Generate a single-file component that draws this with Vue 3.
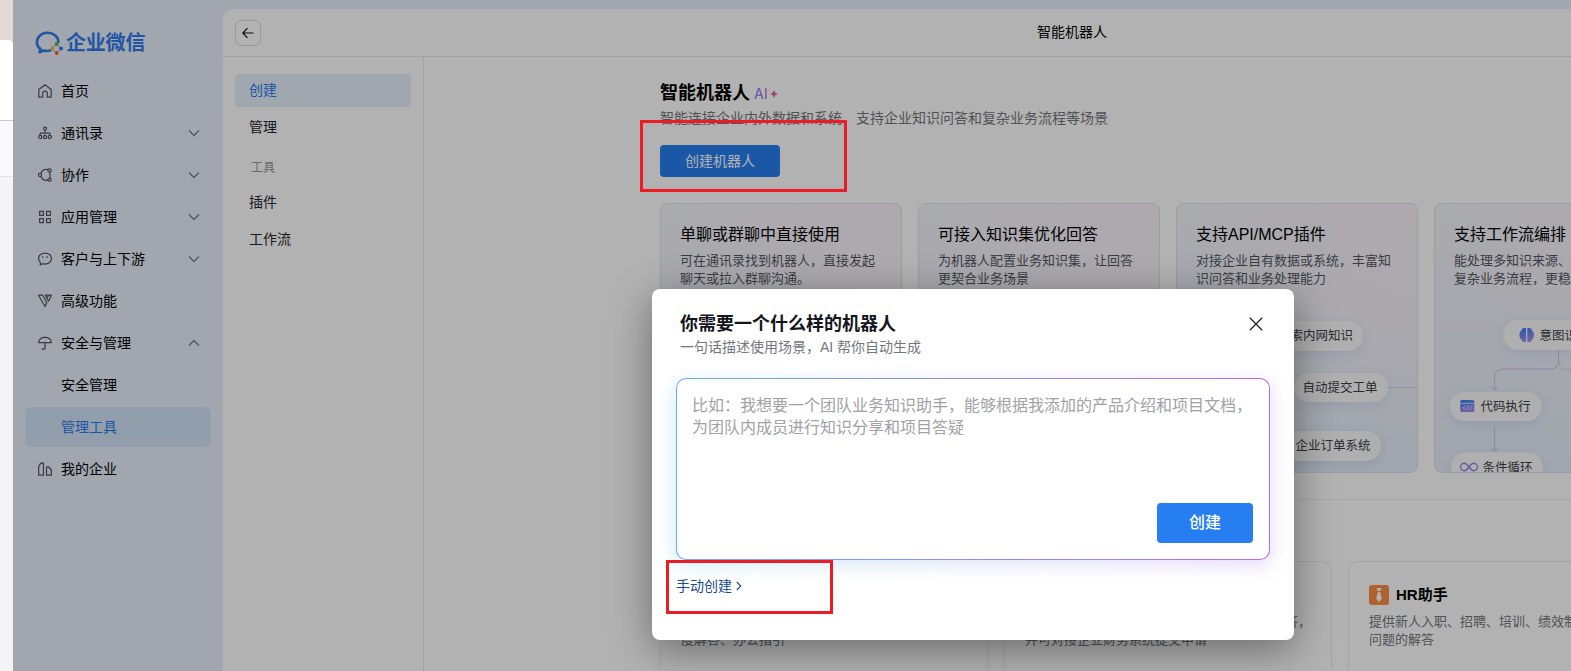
<template>
  <div class="screen">
    <div class="edge">
      <div class="edge__tab"></div>
      <div class="edge__bar"></div>
    </div>

    <div class="app">
      <aside class="sidebar">
        <div class="logo">
          <svg class="logo__mark" viewBox="0 0 28 24" width="28" height="24">
            <path
              d="M23.400 10.800C23 5.400 18.400 1.800 12.500 1.800S1.900 5.900 1.900 11.200c0 2.900 1.300 5.200 3.500 6.800L4.600 21.300l3.900-1.800c2.300.7 4.600.7 6.800.1"
              fill="none"
              stroke="#2f7bea"
              stroke-width="2.600"
              stroke-linejoin="round"
              stroke-linecap="round"
            />
            <path d="M21.500 13l4 4.500-4 4.500-4.500-4.500z" fill="none" stroke="#b9c6d8" stroke-width="1.400" />
            <circle cx="21.700" cy="12.900" r="1.900" fill="#4eb53a" />
            <circle cx="17.200" cy="17.500" r="1.900" fill="#f3bd3a" />
            <circle cx="21.700" cy="22" r="1.900" fill="#f2602c" />
            <circle cx="26" cy="17.500" r="1.900" fill="#2f7bea" />
          </svg>
          <span class="logo__text">企业微信</span>
        </div>
        <nav class="menu">
          <div
            v-for="item in menu"
            :key="item.text"
            :class="['menu__item', { active: item.active }]"
          >
            <svg class="menu__icon" viewBox="0 0 14 14" width="14" height="14">
              <path v-if="item.icon" :d="item.icon" />
            </svg>
            <span class="menu__text">{{ item.text }}</span>
            <svg v-if="item.arrow" class="menu__arrow" viewBox="0 0 12 8" width="12" height="8">
              <path :d="item.arrow === 'up' ? 'M1 6.500l5-5 5 5' : 'M1 1.500l5 5 5-5'" />
            </svg>
          </div>
        </nav>
      </aside>

      <main class="main">
        <header class="header">
          <div class="back">
            <svg viewBox="0 0 12 12" width="12" height="12">
              <path d="M11.500 6H1M5.500 1.200L.8 6l4.700 4.800" />
            </svg>
          </div>
          <div class="header__title">智能机器人</div>
        </header>

        <div class="body">
          <div class="subnav">
            <div
              v-for="item in subnav"
              :key="item.text"
              :class="['subnav__item', { active: item.active, label: item.label }]"
            >
              {{ item.text }}
            </div>
          </div>

          <div class="content">
            <div class="intro">
              <div class="intro__title">
                <span>智能机器人</span>
                <span class="ai">AI</span>
                <svg class="spark" viewBox="0 0 8 8" width="8" height="8">
                  <path d="M4 0L5.200 2.800l2.800 1.200-2.800 1.200L4 8 2.800 5.200 0 4l2.800-1.200z" fill="#d663b8" />
                </svg>
              </div>
              <div class="intro__desc">智能连接企业内外数据和系统，支持企业知识问答和复杂业务流程等场景</div>
              <button class="btn">创建机器人</button>
            </div>

            <div class="features">
              <div v-for="card in features" :key="card.title" class="feature">
                <div class="feature__title">{{ card.title }}</div>
                <div class="feature__desc">{{ card.desc }}</div>

                <svg v-if="card.art === 'plugin'" class="art" viewBox="1 1 240 268">
                  <path d="M212 184.500h30" stroke="#c5d6ee" />
                  <g class="pill">
                    <rect x="70" y="118" width="117" height="30" rx="15" />
                    <rect x="118" y="170" width="94" height="29" rx="14.500" />
                    <rect x="80" y="228" width="125" height="30" rx="15" />
                  </g>
                  <g class="art__text" text-anchor="end">
                    <text x="177" y="137">搜索内网知识</text>
                    <text x="201.500" y="188.500">自动提交工单</text>
                    <text x="194.500" y="247">企业订单系统</text>
                  </g>
                </svg>

                <svg v-if="card.art === 'flow'" class="art" viewBox="1 1 240 268">
                  <defs>
                    <linearGradient id="iconFill" x1="0" y1="0" x2="0.400" y2="1">
                      <stop offset="0" stop-color="#2f7ff0" />
                      <stop offset="1" stop-color="#a18cf0" />
                    </linearGradient>
                  </defs>
                  <g fill="none" stroke="#c9c1ea">
                    <path d="M124.500 147v11q0 8-9 8H70q-9.400 0-9.400 9v12M57 183.500l3.600 3.600 3.600-3.600" />
                    <path d="M124.500 158q0 9 9 9h60" opacity=".7" />
                    <path d="M60.600 223v25M57 244.500l3.600 3.600 3.600-3.600" />
                  </g>
                  <g class="pill">
                    <rect x="69" y="117" width="112" height="30" rx="15" />
                    <rect x="15.700" y="189" width="92" height="29" rx="14.500" />
                    <rect x="17" y="249.500" width="92" height="29" rx="14.500" />
                  </g>
                  <path
                    d="M92.100 125.300c-3-.8-4.700 1-4.800 2.400-2.500 1.200-2.500 7.200 0 8.600.6 2.400 3 3.200 4.800 2.200zM93.300 125.300c3-.8 4.700 1 4.800 2.400 2.500 1.200 2.500 7.200 0 8.600-.6 2.400-3 3.200-4.800 2.200z"
                    fill="url(#iconFill)"
                  />
                  <rect x="26.300" y="197" width="14" height="12" rx="1.500" fill="url(#iconFill)" />
                  <path d="M26.300 200.300h14" stroke="#e6e9fb" stroke-width=".8" />
                  <path
                    d="M31.200 202.800l-2 2 2 2M35.400 202.800l2 2-2 2M34 202.500l-1.400 4.700"
                    fill="none"
                    stroke="#f3f3ff"
                    stroke-width=".9"
                  />
                  <path
                    d="M35 264c-2-2.800-3.200-3.700-4.800-3.700a3.600 3.600 0 0 0 0 7.400c1.600 0 2.800-.9 4.800-3.700s3.200-3.700 4.800-3.700a3.600 3.600 0 0 1 0 7.400c-1.600 0-2.800-.9-4.800-3.700z"
                    fill="none"
                    stroke="#9484e4"
                    stroke-width="1.400"
                  />
                  <g class="art__text">
                    <text x="105.500" y="137">意图识别</text>
                    <text x="46.400" y="208">代码执行</text>
                    <text x="48.400" y="268.500">条件循环</text>
                  </g>
                </svg>
              </div>
            </div>

            <div class="divider"></div>

            <div class="templates">
              <div v-for="tpl in templates" :key="tpl.title" class="template">
                <div class="template__head">
                  <svg viewBox="0 0 20 20" width="20" height="20">
                    <rect width="20" height="20" rx="3" :fill="tpl.color" />
                    <path d="M7.500 3h5l-1.200 3H8.700zM8.900 7h2.200l1.700 6.800L10 17l-2.800-3.200z" fill="#fff" />
                  </svg>
                  <span>{{ tpl.title }}</span>
                </div>
                <div class="template__desc">{{ tpl.desc }}</div>
              </div>
            </div>
          </div>
        </div>
      </main>

      <div class="mask"></div>
    </div>

    <div class="dialog">
      <div class="dialog__head">
        <div class="dialog__title">你需要一个什么样的机器人</div>
        <svg class="dialog__close" viewBox="0 0 14 14" width="14" height="14">
          <path d="M.8.800l12.400 12.400M13.200.8L.8 13.200" />
        </svg>
      </div>
      <div class="dialog__sub">一句话描述使用场景，AI 帮你自动生成</div>
      <div class="prompt">
        <div class="prompt__inner">
          <div class="prompt__placeholder">{{ placeholder }}</div>
          <button class="btn btn--large">创建</button>
        </div>
      </div>
      <div class="manual">
        <span>手动创建</span>
        <svg viewBox="0 0 6 10" width="6" height="10">
          <path d="M.8 1l4 4-4 4" />
        </svg>
      </div>
    </div>

    <div class="marker marker--top"></div>
    <div class="marker marker--bottom"></div>
  </div>
</template>

<script setup>
const icons = {
  home: "M.8 5.400L7 .8l6.200 4.600v7.800H9.300V9.500a2.300 2.300 0 0 0-4.600 0v3.700H.8z",
  contacts:
    "M7 1a1.500 1.500 0 1 1 0 3 1.500 1.500 0 0 1 0-3zM7 4v3M2.200 9V7h9.600v2M2.200 9.300a1.600 1.600 0 1 1 0 3.200 1.600 1.600 0 0 1 0-3.200zM7 9.300a1.600 1.600 0 1 1 0 3.200 1.600 1.600 0 0 1 0-3.200zM11.800 9.300a1.600 1.600 0 1 1 0 3.200 1.600 1.600 0 0 1 0-3.200z",
  share:
    "M2 5.300a1.600 1.600 0 1 1 0 3.200 1.600 1.600 0 0 1 0-3.200zM11.500.8a1.600 1.600 0 1 1 0 3.200 1.600 1.600 0 0 1 0-3.200zM11.500 10a1.600 1.600 0 1 1 0 3.200 1.600 1.600 0 0 1 0-3.200zM9.900 1.700C6.700.9 4 2.500 3 5.500M3 8.500c1 2.800 3.700 4.300 6.900 3.600M12 4v6",
  apps: "M1.600 1.400h3.800v4H1.600zM8.600 1.400h3.800v4H8.600zM1.600 8.600h3.800v4H1.600zM8.600 8.600h3.800v4H8.600z",
  chat: "M7 1c3.600 0 6.400 2.400 6.400 5.500S10.600 12 7 12c-.8 0-1.600-.1-2.300-.3l-2.500 1.200.2-2.500C1.200 9.400.6 8 .6 6.500.6 3.400 3.400 1 7 1zM4.700 4.300v1.500M9.300 4.300v1.500",
  premium: "M.5 1.200h4.300l4 7.600L7 12.500zM7.500 1.200h6l-3 6zM8.800 3.600L11 1.400",
  umbrella: "M.6 6.500C1 3.200 3.600 1.300 7 1.300s6 1.900 6.400 5.200zM7 .3v1M7 6.500v5.400c0 1.900-2.800 1.900-2.800.1",
  company: "M.7 13.200V4.500L2.800 1.200 5.400.8v12.400zM8.500 4.800h1.800l3 3v5.400H8.500z",
};

const menu = [
  { text: "首页", icon: icons.home },
  { text: "通讯录", icon: icons.contacts, arrow: "down" },
  { text: "协作", icon: icons.share, arrow: "down" },
  { text: "应用管理", icon: icons.apps, arrow: "down" },
  { text: "客户与上下游", icon: icons.chat, arrow: "down" },
  { text: "高级功能", icon: icons.premium },
  { text: "安全与管理", icon: icons.umbrella, arrow: "up" },
  { text: "安全管理" },
  { text: "管理工具", active: true },
  { text: "我的企业", icon: icons.company },
];

const subnav = [
  { text: "创建", active: true },
  { text: "管理" },
  { text: "工具", label: true },
  { text: "插件" },
  { text: "工作流" },
];

const features = [
  { title: "单聊或群聊中直接使用", desc: "可在通讯录找到机器人，直接发起\n聊天或拉入群聊沟通。" },
  { title: "可接入知识集优化回答", desc: "为机器人配置业务知识集，让回答\n更契合业务场景" },
  {
    title: "支持API/MCP插件",
    desc: "对接企业自有数据或系统，丰富知\n识问答和业务处理能力",
    art: "plugin",
  },
  {
    title: "支持工作流编排",
    desc: "能处理多知识来源、\n复杂业务流程，更稳",
    art: "flow",
  },
];

const templates = [
  { title: "行政助手", color: "#3a86f5", desc: "提供考勤、休假、办公用品等行政制\n度解答、办公指引" },
  {
    title: "财务助手",
    color: "#35b56a",
    desc: "提供员工报销、差旅、发票等财务制度问题解答，\n并可对接企业财务系统提交申请",
  },
  { title: "HR助手", color: "#fb8b44", desc: "提供新人入职、招聘、培训、绩效制度等\n问题的解答" },
];

const placeholder =
  "比如：我想要一个团队业务知识助手，能够根据我添加的产品介绍和项目文档，\n为团队内成员进行知识分享和项目答疑";
</script>

<style>
body {
  margin: 0;
  overflow: hidden;
}
</style>

<style scoped>
.screen {
  position: relative;
  display: flex;
  width: 100vw;
  height: 671px;
  overflow: hidden;
  font-family: "Liberation Sans", "Noto Sans CJK SC", sans-serif;
  font-size: 14px;
  line-height: 20px;
  color: #000;
}
svg {
  flex: none;
}

/* neighbouring window on the left */
.edge {
  flex: none;
  width: 13px;
  padding-top: 40px;
  box-sizing: border-box;
  background: linear-gradient(#e3d9d6 60px, #f4f4f4 60px);
}
.edge__tab {
  height: 80px;
  background: #fff;
  border-top-right-radius: 5px;
}
.edge__bar {
  height: 55px;
  background: #fafafa;
  border-top: 1px solid #c9c9c9;
  border-bottom: 1px solid #e2e2e2;
}

.app {
  position: relative;
  flex: none;
  display: flex;
  width: 1907px;
  height: 671px;
  background: #e7eefb;
}
.mask {
  position: absolute;
  inset: 0;
  background: rgba(0, 0, 0, 0.3);
}

.sidebar {
  flex: none;
  width: 210px;
}
.logo {
  display: flex;
  align-items: center;
  gap: 3px;
  height: 24px;
  padding: 31px 0 16px 22px;
}
.logo__text {
  font-size: 20px;
  font-weight: 600;
  line-height: 24px;
  color: #2f7bea;
  letter-spacing: -0.2px;
}
.menu {
  display: flex;
  flex-direction: column;
  gap: 2px;
  padding: 0 12px;
}
.menu__item {
  display: flex;
  align-items: center;
  height: 40px;
  padding: 0 11px 0 13px;
  border-radius: 6px;
}
.menu__item.active {
  background: #d2e2f5;
  color: #2a7cf0;
}
.menu__icon,
.menu__arrow {
  fill: none;
  stroke: #55585f;
  stroke-width: 1.25;
  stroke-linejoin: round;
}
.menu__arrow {
  stroke: #787c85;
}
.menu__text {
  flex: 1;
  margin-left: 9px;
}

.main {
  flex: 1;
  margin-top: 9px;
  background: #fff;
  border-top-left-radius: 10px;
}
.header {
  display: flex;
  align-items: center;
  height: 47px;
  padding: 0 12px;
  border-bottom: 1px solid #ebebeb;
}
.header__title {
  flex: 1;
  text-align: center;
  margin-right: 25px;
  padding-bottom: 2px;
}
.back {
  display: flex;
  align-items: center;
  justify-content: center;
  width: 24px;
  height: 24px;
  border: 1px solid #dcdcdc;
  border-radius: 6px;
}
.back svg {
  fill: none;
  stroke: #111;
  stroke-width: 1.2;
}
.body {
  display: flex;
  height: 614px;
}
.subnav {
  flex: none;
  width: 176px;
  padding: 17px 12px 0;
  border-right: 1px solid #ebebeb;
}
.subnav__item {
  height: 33px;
  margin-bottom: 4px;
  padding: 0 14px;
  border-radius: 4px;
  line-height: 33px;
  color: #24272e;
}
.subnav__item.active {
  background: #e5effb;
  color: #2a7cf0;
}
.subnav__item.label {
  height: 34px;
  padding: 0 16px;
  font-size: 12px;
  line-height: 40px;
  color: #95979c;
}

.content {
  flex: none;
  width: 1016px;
  margin-left: 236px;
}
.intro {
  padding-top: 23px;
}
.intro__title {
  display: flex;
  align-items: center;
  height: 27px;
  line-height: 27px;
  font-size: 18px;
  font-weight: bold;
}
.ai {
  margin: 0 2px 0 4px;
  font-family: Inter, sans-serif;
  font-size: 14px;
  font-weight: 500;
  background: linear-gradient(90deg, #8f83f0, #b178e2);
  background-clip: text;
  color: transparent;
}
.intro__desc {
  height: 22px;
  line-height: 22px;
  white-space: nowrap;
  color: #73767c;
}
.btn {
  display: block;
  width: 120px;
  height: 32px;
  margin-top: 16px;
  padding: 0;
  border: 0;
  border-radius: 4px;
  background: #267ef0;
  color: #fff;
  font: inherit;
}

.features {
  display: grid;
  grid-template-columns: repeat(4, 242px);
  gap: 16px;
  margin-top: 26px;
}
.feature {
  position: relative;
  height: 270px;
  box-sizing: border-box;
  padding: 20px 19px 0;
  overflow: hidden;
  border: 1px solid #dde1ea;
  border-radius: 8px;
  background:
    radial-gradient(circle at 100% 5%, #fbf3f9 0, rgba(251, 243, 249, 0) 65%),
    linear-gradient(#f4f5fb, #eef1f9 45%, #e6eefa);
}
.feature__title {
  font-size: 16px;
  line-height: 22px;
}
.feature__desc {
  margin-top: 6px;
  font-size: 13px;
  line-height: 18px;
  white-space: pre;
  color: #55585f;
}
.art {
  position: absolute;
  left: 0;
  top: 0;
  width: 240px;
  height: 268px;
}
.pill {
  fill: #fbfbfd;
  filter: drop-shadow(0 3px 6px rgba(120, 160, 220, 0.2));
}
.art__text {
  font-size: 12.5px;
  fill: #3c3f46;
}

.divider {
  height: 1px;
  margin-top: 26px;
  background: #f0f0f0;
}
.templates {
  display: grid;
  grid-template-columns: repeat(3, 328px);
  gap: 16px;
  margin-top: 61px;
}
.template {
  height: 109px;
  padding: 23px 20px 0;
  border: 1px solid #ebebeb;
  border-bottom: 0;
  border-radius: 10px 10px 0 0;
  box-sizing: border-box;
}
.template__head {
  display: flex;
  align-items: center;
  gap: 7px;
  height: 20px;
  font-size: 15px;
  font-weight: bold;
}
.template__desc {
  margin-top: 8px;
  font-size: 13px;
  line-height: 18px;
  white-space: pre;
  color: #73767c;
}

.dialog {
  position: absolute;
  left: 652px;
  top: 289px;
  width: 642px;
  height: 351px;
  box-sizing: border-box;
  padding: 23px 24px 0;
  border-radius: 8px;
  background: #fff;
  box-shadow: 0 10px 40px rgba(0, 0, 0, 0.4);
}
.dialog__head {
  display: flex;
  align-items: center;
  justify-content: space-between;
  height: 24px;
  padding: 0 7px 0 4px;
}
.dialog__title {
  font-size: 18px;
  font-weight: bold;
  color: #14161c;
}
.dialog__close {
  fill: none;
  stroke: #222;
  stroke-width: 1.3;
}
.dialog__sub {
  height: 20px;
  margin-top: 1px;
  padding-left: 4px;
  color: #73767c;
}
.prompt {
  position: relative;
  height: 182px;
  margin-top: 21px;
  padding: 1px;
  box-sizing: border-box;
  border-radius: 10px;
  background: linear-gradient(90deg, #66a6fa, #8a86fa 45%, #b564f0);
}
.prompt::before {
  content: "";
  position: absolute;
  inset: 4px -2px -6px;
  border-radius: 12px;
  background: linear-gradient(90deg, #6cc8f5, #9fb0ec 50%, #b48cf0);
  filter: blur(9px);
  opacity: 0.3;
}
.prompt__inner {
  position: relative;
  display: flex;
  flex-direction: column;
  justify-content: space-between;
  height: 180px;
  padding: 16px 16px 16px 15px;
  box-sizing: border-box;
  border-radius: 9px;
  background: #fff;
}
.prompt__placeholder {
  font-size: 16px;
  line-height: 22px;
  white-space: pre;
  color: #a0a2a6;
}
.btn--large {
  align-self: flex-end;
  width: 96px;
  height: 40px;
  font-size: 16px;
  font-weight: 500;
}
.manual {
  display: flex;
  align-items: center;
  gap: 4px;
  margin-top: 16px;
  color: #194c8c;
}
.manual svg {
  fill: none;
  stroke: #194c8c;
  stroke-width: 1.1;
}

/* red callout frames */
.marker {
  position: absolute;
  box-sizing: border-box;
  border: 3px solid #ed1c24;
}
.marker--top {
  left: 640px;
  top: 120px;
  width: 207px;
  height: 72px;
}
.marker--bottom {
  left: 666px;
  top: 560px;
  width: 167px;
  height: 54px;
}
</style>
